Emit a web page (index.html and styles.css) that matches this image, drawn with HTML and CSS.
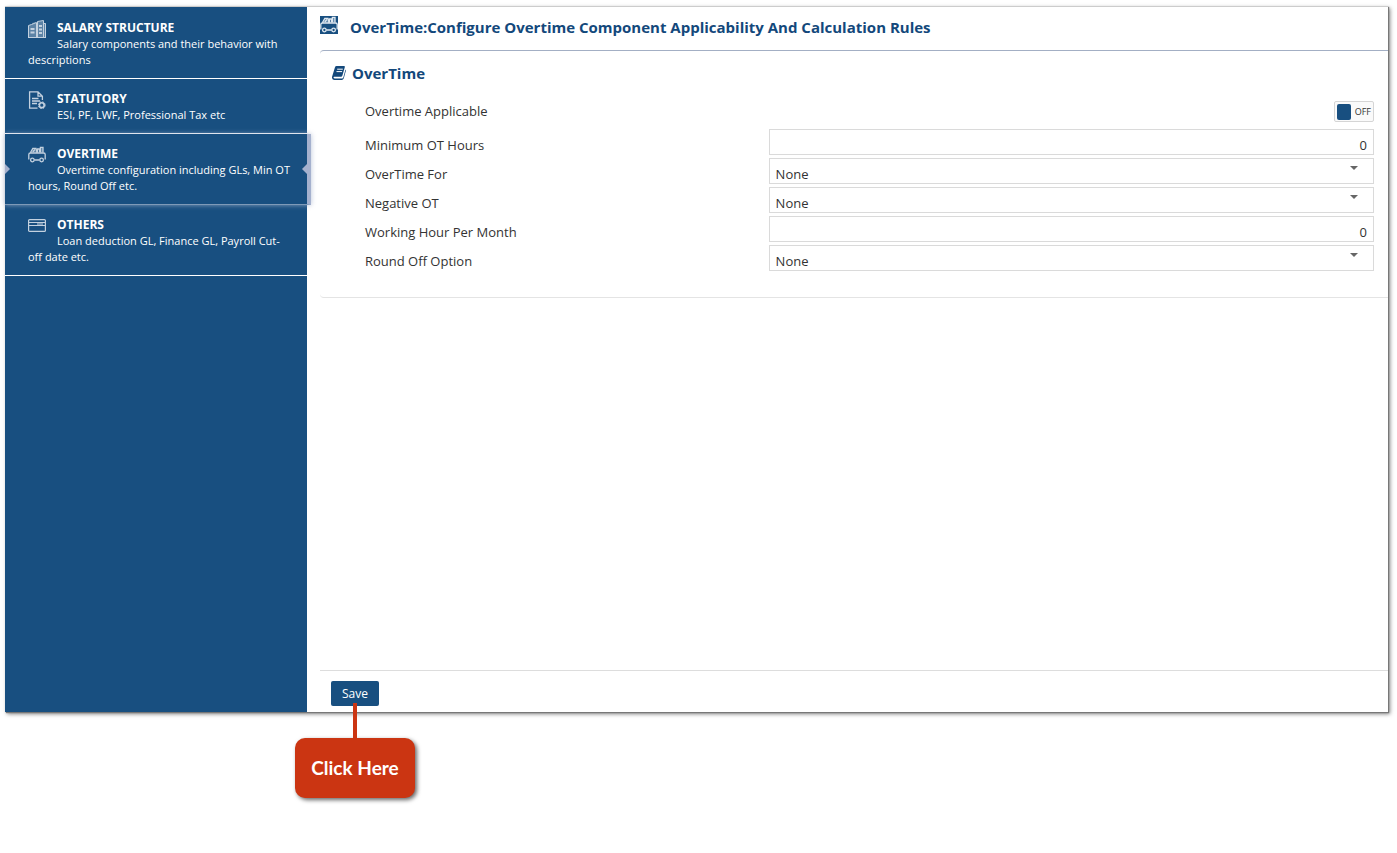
FILE: index.html
```html
<!DOCTYPE html>
<html lang="en">
<head>
  <meta charset="UTF-8" />
  <meta name="viewport" content="width=device-width, initial-scale=1.0" />
  <title>Overtime Settings</title>
  <link rel="stylesheet" href="styles.css">
</head>

<body>
<svg class="sprite" aria-hidden="true">
  <symbol id="icon-car" viewBox="0 0 18 18">
    <g fill="none" stroke="currentColor" stroke-width="1.3">
      <path d="M2.5 6.5 L4.8 2.4 H8 L9 6.5 M.8 13.5 V8.6 Q.8 7 2.4 7 H15.6 Q17.2 7 17.2 8.6 V13.5 M6.4 14 H11.6" />
      <path d="M4.8 6 L7 3.4 M9.6 6.5 V3 H11.6 V6.5 M12.4 6.5 V1.4 H15 V6.5" />
      <circle cx="4.4" cy="14" r="1.8" />
      <circle cx="13.6" cy="14" r="1.8" />
    </g>
    <path fill="currentColor" fill-opacity=".4" d="M3 6.5 L5 2.5 H8 L9 6.5 Z M12.5 1.5 H15 V6.5 H12.5 Z" />
  </symbol>
</svg>

<div class="panel">
  <!-- Sidebar -->
  <nav class="sidebar">
    <a class="nav-item" href="#salary">
      <svg class="nav-icon" viewBox="0 0 18 18" aria-hidden="true">
        <path fill="currentColor" fill-opacity=".4" d="M0 6 L4 4 V17 H0 Z M4 3 L8 2 V17 H4 Z M9 2 L15 .5 V17 H9 Z M15 3 H18 V17 H15 Z" />
        <path fill="none" stroke="currentColor" d="M0 17.5 H18 M.5 17 V5.5 L3.5 4.5 L8.5 2.5 V17 M9.5 17 V1.5 L15.5 .5 V17 M15.5 3.5 H17.5 V17" />
        <path fill="none" stroke="currentColor" stroke-width="2" d="M2.5 9 H6.5 M2.5 12.5 H6.5 M11 6 H14 M11 9.5 H14 M11 13 H14" />
      </svg>
      <strong class="nav-title">SALARY STRUCTURE</strong>
      <span class="nav-text">Salary components and their behavior with descriptions</span>
    </a>
    <a class="nav-item" href="#statutory">
      <svg class="nav-icon" viewBox="0 0 18 18" aria-hidden="true">
        <g fill="none" stroke="currentColor" stroke-width="1.3">
          <path d="M9.5 17.2 H1.6 V.8 H10 L14.4 5.2 V9 M10 .8 V5.2 H14.4 M4 7.5 H10.5 M4 10 H12 M4 12.5 H9" />
          <circle cx="13.8" cy="14.2" r="2.4" stroke-width="1.6" />
        </g>
        <circle cx="13.8" cy="14.2" r="3.4" fill="none" stroke="currentColor" stroke-dasharray="1.4 1.3" />
      </svg>
      <strong class="nav-title">STATUTORY</strong>
      <span class="nav-text">ESI, PF, LWF, Professional Tax etc</span>
    </a>
    <a class="nav-item active" href="#overtime" aria-current="page">
      <svg class="nav-icon" aria-hidden="true"><use href="#icon-car" /></svg>
      <strong class="nav-title">OVERTIME</strong>
      <span class="nav-text">Overtime configuration including GLs, Min OT hours, Round Off etc.</span>
    </a>
    <a class="nav-item" href="#others">
      <svg class="nav-icon" viewBox="0 0 18 18" aria-hidden="true">
        <rect x=".6" y="2.6" width="16.8" height="11.8" rx="1" fill="none" stroke="currentColor" stroke-width="1.2" />
        <path fill="none" stroke="currentColor" d="M1 5.5 H17 M1 8.5 H17 M9 7 H15" />
      </svg>
      <strong class="nav-title">OTHERS</strong>
      <span class="nav-text">Loan deduction GL, Finance GL, Payroll Cut-off date etc.</span>
    </a>
  </nav>

  <!-- Overtime form -->
  <main class="content">
    <header class="page-header">
      <svg class="header-icon" aria-hidden="true"><use href="#icon-car" /></svg>
      <h1>OverTime:Configure Overtime Component Applicability And Calculation Rules</h1>
    </header>

    <form class="settings">
      <section class="card">
        <h2>
          <svg class="book-icon" viewBox="0 0 14 14" aria-hidden="true">
            <path fill="currentColor" d="M4.6 0 H12 Q13.2 0 12.8 1.2 L10.4 9.6 Q10 10.8 9 10.8 H2.2 Q1.4 10.8 1.5 11.6 Q1.6 12.4 2.6 12.4 H10 Q11 12.4 11.3 11.4 L13.5 3.4 Q14.2 4 13.8 5 L11.8 12.2 Q11.2 14 9.8 14 H2.4 Q.4 14 0 12 Q-.1 11 .3 10 L2.9 1.4 Q3.3 0 4.6 0 Z" />
            <path stroke="#fff" d="M5.2 3.2 H10.8 M4.5 5.6 H10.1" />
          </svg>
          OverTime
        </h2>

        <div class="row row-toggle">
          <label class="row-label" for="applicable">Overtime Applicable</label>
          <label class="toggle">
            <input type="checkbox" id="applicable" />
            <span>OFF</span>
          </label>
        </div>
        <div class="row">
          <label class="row-label" for="min-hours">Minimum OT Hours</label>
          <input class="field number" id="min-hours" type="text" value="0" />
        </div>
        <div class="row">
          <label class="row-label" for="overtime-for">OverTime For</label>
          <div class="select-wrap">
            <select class="field" id="overtime-for"><option>None</option></select>
          </div>
        </div>
        <div class="row">
          <label class="row-label" for="negative-ot">Negative OT</label>
          <div class="select-wrap">
            <select class="field" id="negative-ot"><option>None</option></select>
          </div>
        </div>
        <div class="row">
          <label class="row-label" for="working-hour">Working Hour Per Month</label>
          <input class="field number" id="working-hour" type="text" value="0" />
        </div>
        <div class="row">
          <label class="row-label" for="round-off">Round Off Option</label>
          <div class="select-wrap">
            <select class="field" id="round-off"><option>None</option></select>
          </div>
        </div>
      </section>

      <footer class="actions">
        <div class="save-wrap">
          <button type="submit">Save</button>
          <div class="callout">Click Here</div>
        </div>
      </footer>
    </form>
  </main>
</div>
</body>
</html>
```
FILE: styles.css
```css
* {
  box-sizing: border-box;
}

body {
  min-height: 100vh;
  margin: 0;
  padding: 6px 9px 0 5px;
  background-color: #ffffff;
  color: #333333;
  font-family: "Open Sans", "Noto Sans", sans-serif;
  font-size: 13px;
}

.sprite {
  display: none;
}

.panel {
  display: flex;
  min-height: calc(100vh - 147px);
  border-top: 1px solid #cccccc;
  box-shadow: 1px 1px 1px #777777, 2px 2px 4px rgba(0, 0, 0, 0.5);
}

/* Sidebar */
.sidebar {
  flex: 0 0 302px;
  padding-top: 1px;
  background-color: #184f80;
}

.nav-item {
  display: block;
  position: relative;
  padding: 12px 14px 10px 23px;
  border-bottom: 1px solid #ffffff;
  color: #ffffff;
  font-size: 11px;
  line-height: 16px;
  text-decoration: none;
}

.nav-icon {
  float: left;
  width: 18px;
  height: 18px;
  margin-right: 11px;
  color: #c3d1df;
}

.nav-title {
  display: block;
  font-size: 12px;
  font-weight: 700;
}

.nav-item.active {
  z-index: 1;
  margin-right: -4px;
  border-right: 4px solid #a5b1ce;
  border-bottom-color: #7e9ab8;
  background-color: #184f80;
  box-shadow: 0 0 5px rgba(165, 177, 206, 0.8);
}

.active::before,
.active::after {
  content: "";
  position: absolute;
  top: 50%;
  border: 5px solid transparent;
  transform: translateY(-50%);
}

.active::before {
  left: 0;
  border-left-color: #a5b1ce;
  border-right: none;
}

.active::after {
  right: 0;
  border-right-color: #a5b1ce;
  border-left: none;
}

/* Content */
.content {
  display: flex;
  flex: 1;
  flex-direction: column;
  margin-left: 13px;
}

.page-header {
  display: flex;
  gap: 12px;
  height: 43px;
  padding-top: 9px;
}

.header-icon {
  width: 18px;
  height: 18px;
  background-color: #184f80;
  color: #dfe8f0;
}

h1,
h2 {
  margin: 0;
  color: #13487b;
  font-size: 15px;
  font-weight: 700;
  line-height: 22px;
}

h2 {
  display: flex;
  align-items: center;
  gap: 6px;
  margin: 0 0 17px 12px;
}

.book-icon {
  width: 14px;
  height: 14px;
}

.settings {
  display: flex;
  flex: 1;
  flex-direction: column;
}

.card {
  padding: 11px 14px 23px 0;
  border-top: 1px solid #a3afc4;
  border-bottom: 1px solid #e4e4e4;
  border-radius: 4px 0 0 4px;
}

.row {
  display: flex;
  margin: 0 0 3px 45px;
}

.row-toggle {
  justify-content: space-between;
  margin-bottom: 7px;
}

.row-label {
  width: 40%;
  padding-top: 6px;
  line-height: 20px;
}

.row-toggle .row-label {
  padding-top: 0;
}

.field {
  display: block;
  width: 60%;
  height: 26px;
  padding: 5px 6px 0;
  border: 1px solid #dadada;
  border-radius: 0;
  background-color: #ffffff;
  color: #333333;
  font: inherit;
  appearance: none;
}

.number {
  text-align: right;
}

.select-wrap {
  position: relative;
  width: 60%;
}

.select-wrap .field {
  width: 100%;
}

.select-wrap::after {
  content: "";
  position: absolute;
  top: 8px;
  right: 16px;
  border: 4px solid transparent;
  border-top-color: #666666;
  border-bottom: none;
  pointer-events: none;
}

.toggle {
  display: flex;
  align-items: center;
  justify-content: space-between;
  width: 40px;
  height: 21px;
  padding: 0 2px;
  border: 1px solid #d5d5d5;
  border-radius: 2px;
  background-color: #fafafa;
  font-size: 9px;
}

.toggle input {
  width: 14px;
  height: 16px;
  margin: 0;
  border-radius: 2px;
  background-color: #184f80;
  appearance: none;
}

/* Footer */
.actions {
  display: flex;
  margin-top: auto;
  padding: 10px 11px 6px;
  border-top: 1px solid #dddddd;
}

.save-wrap {
  position: relative;
}

button {
  display: block;
  width: 48px;
  height: 25px;
  padding: 0;
  border: none;
  border-radius: 2px;
  background-color: #184f80;
  color: #ffffff;
  font: inherit;
  font-size: 12px;
  cursor: pointer;
}

/* Callout hanging under the save button */
.callout {
  position: absolute;
  top: 57px;
  left: 50%;
  width: 120px;
  border-radius: 10px;
  background-color: #cb3512;
  box-shadow: 2px 2px 4px rgba(0, 0, 0, 0.6);
  color: #ffffff;
  font-family: Lato, sans-serif;
  font-size: 19px;
  font-weight: 700;
  line-height: 60px;
  text-align: center;
  transform: translateX(-50%);
}

.callout::before {
  content: "";
  position: absolute;
  bottom: 100%;
  left: 50%;
  width: 4px;
  height: 35px;
  margin-left: -2px;
  background-color: #cb3512;
}
```
